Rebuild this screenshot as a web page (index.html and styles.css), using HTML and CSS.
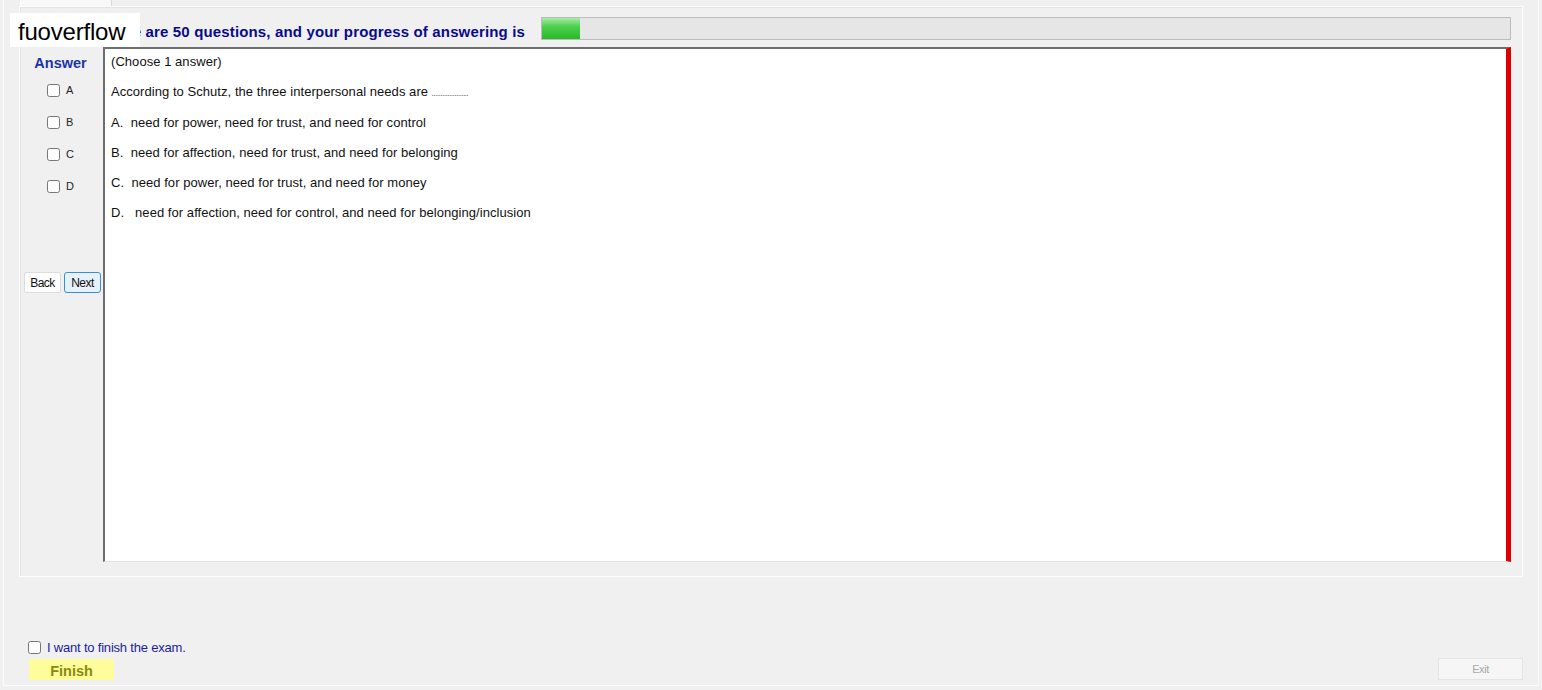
FILE: index.html
```html
<!DOCTYPE html>
<html lang="en">

<head>
    <meta charset="UTF-8">
    <meta name="viewport" content="width=device-width, initial-scale=1.0">
    <title>Exam</title>
    <link rel="stylesheet" href="styles.css">
</head>

<body>
    <div class="window">
        <div class="tabstrip">
            <div class="tab"></div>
        </div>

        <div class="panel">
            <div class="head">
                <div class="title">There are 50 questions, and your progress of answering is</div>
                <div class="progress">
                    <div class="progress-fill" style="width: 38px;"></div>
                </div>
            </div>

            <div class="main">
                <div class="side">
                    <div class="answer-title">Answer</div>
                    <label class="opt"><input type="checkbox"> A</label>
                    <label class="opt"><input type="checkbox"> B</label>
                    <label class="opt"><input type="checkbox"> C</label>
                    <label class="opt"><input type="checkbox"> D</label>

                    <div class="nav-btns">
                        <button class="btn">Back</button>
                        <button class="btn btn-active">Next</button>
                    </div>
                </div>

                <div class="question">
                    <div class="qtext">
                        <p>(Choose 1 answer)</p>
                        <p>According to Schutz, the three interpersonal needs are <span class="dots">.....................</span></p>
                        <p>A.&nbsp;&nbsp;need for power, need for trust, and need for control</p>
                        <p>B.&nbsp;&nbsp;need for affection, need for trust, and need for belonging</p>
                        <p>C.&nbsp;&nbsp;need for power, need for trust, and need for money</p>
                        <p>D.&nbsp;&nbsp; need for affection, need for control, and need for belonging/inclusion</p>
                    </div>
                </div>
            </div>
        </div>

        <div class="footer">
            <label class="finish-check"><input type="checkbox"> I want to finish the exam.</label>
            <div class="footer-btns">
                <button class="finish">Finish</button>
                <button class="exit" disabled>Exit</button>
            </div>
        </div>
    </div>

    <div class="watermark">fuoverflow</div>
</body>

</html>
```

FILE: styles.css
```css
body {
    font-family: "Liberation Sans", Arial, sans-serif;
    background-color: #f0f0f0;
    margin: 0;
    padding: 0;
}

.window {
    margin: 0 3px 0 3px;
    height: 686px;
    border-left: 1px solid #fbfbfb;
    border-right: 1px solid #fbfbfb;
    border-bottom: 1px solid #fbfbfb;
    box-sizing: border-box;
}

.tabstrip {
    height: 6px;
    padding-left: 16px;
}

.tab {
    width: 90px;
    height: 6px;
    background-color: #f8f8f8;
    border-left: 1px solid #fff;
    border-right: 1px solid #d8d8d8;
}

.panel {
    margin: 0 15px 0 15px;
    height: 571px;
    border: 1px solid #fdfdfd;
    box-shadow: inset 1px 1px 0 #e3e3e3;
    box-sizing: border-box;
    padding: 10px 11px 0 0;
}

.head {
    display: flex;
    align-items: center;
    height: 23px;
    margin-bottom: 7px;
}

.title {
    width: 521px;
    flex-shrink: 0;
    box-sizing: border-box;
    padding-right: 16px;
    padding-top: 6px;
    text-align: right;
    font-size: 15px;
    font-weight: bold;
    letter-spacing: 0.15px;
    color: #0a0a8a;
    white-space: nowrap;
    overflow: hidden;
}

.progress {
    flex: 1;
    height: 23px;
    box-sizing: border-box;
    border: 1px solid #bcbcbc;
    background-color: #e6e6e6;
}

.progress-fill {
    height: 21px;
    background: linear-gradient(to bottom, #a6eca6 0%, #4fd04f 40%, #28b828 100%);
}

.main {
    display: flex;
    height: 515px;
}

.side {
    width: 83px;
    padding-left: 4px;
    box-sizing: border-box;
}

.answer-title {
    font-size: 14.5px;
    font-weight: bold;
    color: #1c35a6;
    text-align: center;
    padding-top: 7px;
    padding-right: 6px;
    line-height: 18px;
}

.opt {
    display: flex;
    align-items: center;
    height: 32px;
    padding-left: 23px;
    font-size: 11px;
    color: #222;
    gap: 6px;
}

.answer-title + .opt {
    margin-top: 2px;
}

.opt input,
.finish-check input {
    margin: 0;
    width: 13px;
    height: 13px;
}

.nav-btns {
    display: flex;
    gap: 3px;
    margin-top: 70px;
}

.btn {
    width: 37px;
    height: 21px;
    padding: 0;
    font-family: "Liberation Sans", Arial, sans-serif;
    font-size: 12px;
    letter-spacing: -0.5px;
    color: #111;
    background-color: #fdfdfd;
    border: 1px solid #dcdcdc;
    border-radius: 2px;
}

.btn-active {
    background-color: #e5f1fb;
    border: 1px solid #3c8fd6;
    border-radius: 3px;
}

.question {
    flex: 1;
    background-color: #fff;
    border-top: 2px solid #6e6e6e;
    border-left: 2px solid #6e6e6e;
    border-right: 5px solid #dd0000;
    border-bottom: 1px solid #e2e2e2;
    box-sizing: border-box;
    padding-left: 6px;
}

.qtext {
    margin-top: -2px;
}

.qtext p {
    margin: 0;
    font-size: 13px;
    line-height: 30px;
    color: #111;
    letter-spacing: 0.05px;
}

.qtext p:nth-child(3) {
    margin-top: 1px;
}

.dots {
    font-size: 7px;
    line-height: 1;
    letter-spacing: -0.2px;
}

.footer {
    padding: 62px 15px 0 24px;
}

.finish-check {
    display: flex;
    align-items: center;
    gap: 6px;
    height: 17px;
    font-size: 13px;
    letter-spacing: -0.2px;
    color: #1c1c9c;
}

.footer-btns {
    display: flex;
    justify-content: space-between;
    align-items: flex-end;
    margin-top: 2px;
    padding-left: 1px;
}

.finish {
    width: 85px;
    height: 21px;
    padding: 0;
    border: none;
    background-color: #fdfd9c;
    color: #8a8a0a;
    font-family: "Liberation Sans", Arial, sans-serif;
    font-size: 14.5px;
    font-weight: bold;
    padding-top: 3px;
}

.exit {
    width: 85px;
    height: 22px;
    padding: 0;
    border: 1px solid #e4e4e4;
    background-color: #f6f6f6;
    color: #a8a8a8;
    font-family: "Liberation Sans", Arial, sans-serif;
    font-size: 11px;
    letter-spacing: -0.4px;
}

.watermark {
    position: absolute;
    left: 10px;
    top: 13px;
    width: 130px;
    height: 34px;
    background-color: #fff;
    font-size: 24px;
    line-height: 38px;
    padding-left: 8px;
    box-sizing: border-box;
    color: #000;
    letter-spacing: -0.2px;
}
```
